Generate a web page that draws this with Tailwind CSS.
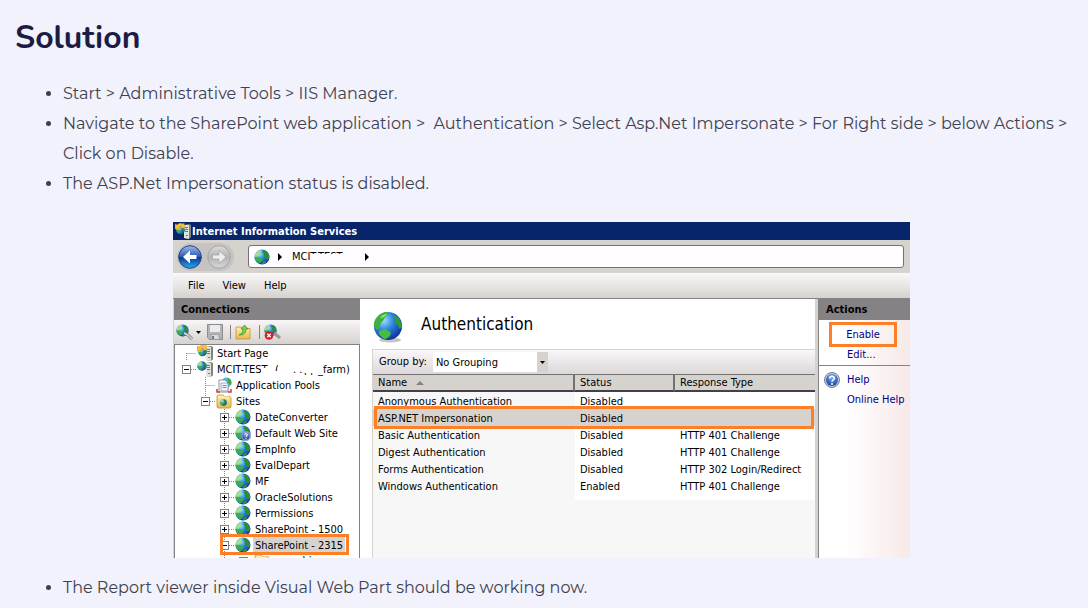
<!DOCTYPE html>
<html lang="en">
<head>
<meta charset="utf-8">
<meta name="viewport" content="width=device-width, initial-scale=1">
<title>Solution</title>
<script src="https://cdn.jsdelivr.net/npm/@tailwindcss/browser@4"></script>
</head>
<body class="min-h-screen overflow-x-hidden bg-[#f1f2fb] font-['Montserrat','Inter',sans-serif] text-[#3f4150]">
<svg class="absolute size-0" aria-hidden="true">
  <defs>
    <radialGradient id="sea" cx="35%" cy="30%" r="75%"><stop offset="0" stop-color="#9fe0ff"/><stop offset=".45" stop-color="#2f86dc"/><stop offset="1" stop-color="#0b2f9a"/></radialGradient>
    <linearGradient id="fold" x1="0" y1="0" x2="0" y2="1"><stop offset="0" stop-color="#fff0b0"/><stop offset="1" stop-color="#e8b84a"/></linearGradient>
    <radialGradient id="help" cx="50%" cy="25%" r="80%"><stop offset="0" stop-color="#7fb0f4"/><stop offset="1" stop-color="#12399f"/></radialGradient>
    <linearGradient id="back" x1="0" y1="0" x2="0" y2="1"><stop offset="0" stop-color="#9dbcec"/><stop offset=".48" stop-color="#2c5cb8"/><stop offset=".52" stop-color="#0b3596"/><stop offset="1" stop-color="#27b0f5"/></linearGradient>
    <linearGradient id="fwd" x1="0" y1="0" x2="0" y2="1"><stop offset="0" stop-color="#dcdcdc"/><stop offset=".5" stop-color="#b4b4b4"/><stop offset="1" stop-color="#d8d8d8"/></linearGradient>
    <symbol id="globe" viewBox="0 0 32 32">
      <circle cx="16" cy="16" r="15" fill="url(#sea)"/>
      <path d="M3 9C6 4 9 2 13 2l2 3-3 3 1 3-4 2-2 4-4 0-2-2Z" fill="#a4dc9a"/>
      <path d="M1 16l4-1 5 2 5 0 3 4-3 4-4 4C5 27 1 22 1 16Z" fill="#38b04a" opacity=".9"/>
      <path d="M19 2c5 1 9 5 11 10l0 7-4 3-3-5-4-2 1-5-3-3Z" fill="#2a8f3c"/>
      <path d="M18 25l5-1 1 3-5 3-3 0Z" fill="#2f9d34"/>
    </symbol>
    <symbol id="bigglobe" viewBox="0 0 32 32">
      <circle cx="16" cy="16" r="15" fill="url(#sea)"/>
      <path d="M4 7C7 3 11 1 15 1l2 2-4 3-2 4-3 3-1 5-3 2-3-4C1 12 2 9 4 7Z" fill="#3fb03c"/>
      <path d="M22 5l4 1c3 3 5 7 5 11l-3 2-2-5-3-1 1-4Z" fill="#2f9d34"/>
      <path d="M7 21l6-2 6 4-1 4-5 3c-3-1-5-3-7-6Z" fill="#46bd3e"/>
      <path d="M9 5l5-2 1 1-4 3-3 1Z" fill="#b8f08c" opacity=".7"/>
    </symbol>
    <symbol id="server" viewBox="0 0 16 16">
      <path d="M9 2l5-1 2 1v12l-2 2-5-1Z" fill="#7d827e"/><path d="M9 2h5v14l-5-1Z" fill="#dfe3dc"/>
      <path d="M10 4.500h3M10 6.500h3M10 8.500h3" stroke="#70756f"/><path d="M11 12.500h2" stroke="#3d9b3d"/>
    </symbol>
    <symbol id="start" viewBox="0 0 16 16">
      <use href="#server" width="16" height="16"/><use href="#globe" x="1" y="2" width="9" height="10"/>
      <path d="M0 6l0-5 2 1c2-2 4-2 6-1l1-1 1 5-5 0 1.500-1.500C5 3 4 3.500 3.500 4.500L4 6Z" fill="#f8c23c" stroke="#d08c14" stroke-width=".5"/>
    </symbol>
    <symbol id="host" viewBox="0 0 16 16"><use href="#server" width="16" height="16"/><use href="#globe" x="0" y="0" width="10" height="10"/></symbol>
    <symbol id="pools" viewBox="0 0 16 16">
      <circle cx="10.500" cy="5.500" r="5" fill="#49b8dc"/><path d="M12 1c3 1 4 4 3 7l-3-2Z" fill="#47a347"/>
      <path d="M3 3h6l3 3v9H3Z" fill="#fff" stroke="#8993ac"/><path d="M5 6h6l1 1v7H5Z" fill="#f1f4fb" stroke="#7f8aa8" stroke-width=".7"/><path d="M6.500 8.500h4M6.500 10.500h4" stroke="#69759c" stroke-width=".8"/>
      <path d="M1 12v3h3M15 12v3h-3" fill="none" stroke="#d63c2e" stroke-width="1.500"/>
    </symbol>
    <symbol id="folder" viewBox="0 0 16 16">
      <path d="M1 3l1-1h5l1 1.500h6l1 1V14l-1 1H2l-1-1Z" fill="url(#fold)" stroke="#c9a052"/><path d="M2 4h11" stroke="#fff6cf"/>
    </symbol>
    <symbol id="sites" viewBox="0 0 16 16"><use href="#folder" width="16" height="16"/><use href="#globe" x="4" y="6" width="7" height="7"/></symbol>
    <symbol id="ask" viewBox="0 0 16 16">
      <circle cx="8" cy="8" r="7.500" fill="#c4c8d4" stroke="#75809c"/><circle cx="8" cy="8" r="6" fill="url(#help)"/>
      <path d="M5.700 6.500C5.700 3.400 10.400 3.600 10.300 6.300 10.200 8 8 7.900 8 9.800" fill="none" stroke="#fff" stroke-width="1.600"/><circle cx="8" cy="12" r="1" fill="#fff"/>
    </symbol>
    <symbol id="plus" viewBox="0 0 19 16"><path d="M14 8.500h5" stroke="#888" stroke-dasharray="1 1"/><rect x="5.500" y="4.500" width="8" height="8" fill="#fff" stroke="#848284"/><path d="M7 8.500h5M9.500 6v5" stroke="#000"/></symbol>
    <symbol id="minus" viewBox="0 0 19 16"><path d="M14 8.500h5" stroke="#888" stroke-dasharray="1 1"/><rect x="5.500" y="4.500" width="8" height="8" fill="#fff" stroke="#848284"/><path d="M7 8.500h5" stroke="#000"/></symbol>
    <symbol id="line" viewBox="0 0 19 16"><path d="M9.500 0v16" stroke="#888" stroke-dasharray="1 1"/></symbol>
    <symbol id="half" viewBox="0 0 19 16"><path d="M9.500 0v8" stroke="#888" stroke-dasharray="1 1"/></symbol>
    <symbol id="elbow" viewBox="0 0 19 16"><path d="M9.500 8.500h10M9.500 8v8" stroke="#888" stroke-dasharray="1 1"/></symbol>
    <symbol id="tee" viewBox="0 0 19 16"><path d="M9.500 8.500h10M9.500 0v16" stroke="#888" stroke-dasharray="1 1"/></symbol>
  </defs>
</svg>

<main class="pr-5 pl-[15px] pt-[17px]">
  <h1 class="font-['Nunito','Noto_Sans',sans-serif] text-[32px] leading-[42px] font-bold text-[#1c1d45]">Solution</h1>

  <ul class="mt-5 list-disc pl-12 text-base leading-[30px]">
    <li>Start &gt; Administrative Tools &gt; IIS Manager.</li>
    <li>Navigate to the SharePoint web application &gt;&nbsp; Authentication &gt; Select Asp.Net Impersonate &gt; For Right side &gt; below Actions &gt; Click on Disable.</li>
    <li>The ASP.Net Impersonation status is disabled.</li>
  </ul>

  <section aria-label="IIS Manager" class="mx-auto mt-[23px] w-full max-w-[737px] bg-[#d6d3ce] font-['Tahoma','DejaVu_Sans_Condensed','DejaVu_Sans',sans-serif] text-[11px] leading-4 text-black">
    <header class="flex h-[18px] items-center gap-px bg-[#08246b] pl-0.5 font-bold text-white">
      <svg class="size-4 shrink-0"><use href="#start"/></svg>
      <span class="w-[168px] overflow-hidden pt-px whitespace-nowrap">Internet Information Services</span>
    </header>

    <div class="flex h-[33px] items-center pr-1.5 pl-1">
      <div class="flex h-7 w-[57px] items-center gap-[5px] rounded-full bg-[#c6c3c2] pl-px">
        <button aria-label="Back" class="size-6 shrink-0"><svg viewBox="0 0 24 24" class="size-6"><circle cx="12" cy="12" r="11.300" fill="url(#back)" stroke="#27407c"/><path d="M5 12l7-6.500v4.500h6.500v4H12v4.500Z" fill="#fff"/></svg></button>
        <button aria-label="Forward" class="size-6 shrink-0"><svg viewBox="0 0 24 24" class="size-6"><circle cx="12" cy="12" r="11.300" fill="url(#fwd)" stroke="#a5a5a5"/><path d="M19 12l-7-6.500v4.500H5.500v4H12v4.500Z" fill="#eee" stroke="#999" stroke-width=".6"/></svg></button>
      </div>
      <nav aria-label="Address" class="ml-3.5 flex h-[23px] flex-1 items-center rounded-[3px] border border-[#737173] bg-[#fffdff] pl-[5px]">
        <svg class="size-4"><use href="#globe"/></svg>
        <svg viewBox="0 0 4 8" class="ml-2 h-2 w-1"><path d="M0 0l4 4-4 4Z"/></svg>
        <span class="relative ml-2.5 w-[60px] whitespace-nowrap">MCIT-TEST<span class="absolute top-[5px] right-0 left-[19px] h-3 bg-[#fffdff]"></span></span>
        <svg viewBox="0 0 4 8" class="ml-[13px] h-2 w-1"><path d="M0 0l4 4-4 4Z"/></svg>
      </nav>
    </div>

    <div class="flex h-[26px] items-center gap-[18px] border-b border-[#848284] bg-linear-to-b from-[#faf7f9] to-[#d6d3ce] pl-[15px]">
      <button>File</button><button>View</button><button>Help</button>
    </div>

    <div class="flex">
      <aside class="flex w-[187px] shrink-0 flex-col border-l border-[#d6d3ce]">
        <h2 class="h-[21px] bg-[#848284] pl-[7px] leading-[22px] font-bold">Connections</h2>
        <div class="flex h-[25px] items-center border-b border-[#848284] bg-linear-to-b from-[#f9f4f6] to-[#d6d3ce] pl-0.5">
          <button aria-label="Connect" class="flex items-center gap-0.5">
            <svg viewBox="0 0 18 16" class="h-4 w-[18px]"><use href="#globe" width="13" height="13"/><path d="M8 9l4 2 4 4" fill="none" stroke="#777" stroke-width="3"/><path d="M8 9l4 2 4 4" fill="none" stroke="#d7dbe2" stroke-width="1.500"/></svg>
            <svg viewBox="0 0 5 3" class="h-[3px] w-[5px]"><path d="M0 0h5L2.500 3Z"/></svg>
          </button>
          <button aria-label="Save" class="ml-1.5"><svg viewBox="0 0 16 16" class="size-4"><path d="M.5.5h15v15h-13l-2-2Z" fill="#b4b4b8" stroke="#8b8b90"/><path d="M3 1h10v7H3Z" fill="#ececf0"/><path d="M4 10.500h8v5H4Z" fill="#dadade" stroke="#8b8b90" stroke-width=".6"/><path d="M5 12h2v3H5Z" fill="#77777c"/></svg></button>
          <span class="ml-[7px] h-3.5 w-px bg-[#848284]"></span>
          <button aria-label="Up" class="ml-1"><svg viewBox="0 0 16 16" class="size-4"><path d="M1 3h5l1.500 1.500H15V15H1Z" fill="url(#fold)" stroke="#c9a052"/><path d="M4 11c3-1 4-3 4-6H6L9.500 1 13 5h-2c0 4-2 6-7 6Z" fill="#7bd34a" stroke="#2f8a22" stroke-width=".7"/></svg></button>
          <span class="ml-2 h-3.5 w-px bg-[#848284]"></span>
          <button aria-label="Disconnect" class="ml-1"><svg viewBox="0 0 17 16" class="h-4 w-[17px]"><use href="#globe" width="13" height="13"/><path d="M10 9l6 5" stroke="#999" stroke-width="3"/><circle cx="5" cy="11.500" r="4.300" fill="#d71f1f"/><path d="M3.300 9.800l3.400 3.400M6.700 9.800l-3.400 3.400" stroke="#fff" stroke-width="1.300"/></svg></button>
        </div>
        <ul class="flex-1 border-r border-l border-[#848284] bg-white pl-0.5 leading-[18px] whitespace-nowrap">
          <li class="flex h-4"><svg class="h-4 w-[19px]"><use href="#elbow"/></svg><svg class="ml-px size-4"><use href="#start"/></svg><span class="ml-0.5 px-0.5">Start Page</span></li>
          <li class="flex h-4"><svg class="h-4 w-[19px]"><use href="#minus"/></svg><svg class="ml-px size-4"><use href="#host"/></svg><span class="relative ml-0.5 flex-1 pl-0.5">MCIT-TEST<span class="absolute top-[7px] left-[46px] h-2.5 w-2 bg-white"></span><span class="absolute top-0 left-[60px]">(<span class="absolute top-[10px] left-0 h-1 w-2 bg-white"></span></span><span class="absolute top-0 left-[78px]">. .<span class="absolute top-0 left-[11px]">pp</span><span class="absolute top-0 left-[10px] h-3 w-4 bg-white"></span></span><span class="absolute top-0 left-[103px]">_farm)</span></span></li>
          <li class="flex h-4"><svg class="h-4 w-[19px]"></svg><svg class="h-4 w-[19px]"><use href="#tee"/></svg><svg class="ml-px size-4"><use href="#pools"/></svg><span class="ml-0.5 px-0.5">Application Pools</span></li>
          <li class="flex h-4"><svg class="h-4 w-[19px]"></svg><svg class="h-4 w-[19px]"><use href="#half"/><use href="#minus"/></svg><svg class="ml-px size-4"><use href="#sites"/></svg><span class="ml-0.5 px-0.5">Sites</span></li>
          <li class="flex h-4 pl-[38px]"><svg class="h-4 w-[19px]"><use href="#line"/><use href="#plus"/></svg><svg class="ml-px size-4"><use href="#globe"/></svg><span class="ml-0.5 px-0.5">DateConverter</span></li>
          <li class="flex h-4 pl-[38px]"><svg class="h-4 w-[19px]"><use href="#line"/><use href="#plus"/></svg><svg class="ml-px size-4"><use href="#globe"/><use href="#ask" x="6" y="6" width="10" height="10"/></svg><span class="ml-0.5 px-0.5">Default Web Site</span></li>
          <li class="flex h-4 pl-[38px]"><svg class="h-4 w-[19px]"><use href="#line"/><use href="#plus"/></svg><svg class="ml-px size-4"><use href="#globe"/></svg><span class="ml-0.5 px-0.5">EmpInfo</span></li>
          <li class="flex h-4 pl-[38px]"><svg class="h-4 w-[19px]"><use href="#line"/><use href="#plus"/></svg><svg class="ml-px size-4"><use href="#globe"/></svg><span class="ml-0.5 px-0.5">EvalDepart</span></li>
          <li class="flex h-4 pl-[38px]"><svg class="h-4 w-[19px]"><use href="#line"/><use href="#plus"/></svg><svg class="ml-px size-4"><use href="#globe"/></svg><span class="ml-0.5 px-0.5">MF</span></li>
          <li class="flex h-4 pl-[38px]"><svg class="h-4 w-[19px]"><use href="#line"/><use href="#plus"/></svg><svg class="ml-px size-4"><use href="#globe"/></svg><span class="ml-0.5 px-0.5">OracleSolutions</span></li>
          <li class="flex h-4 pl-[38px]"><svg class="h-4 w-[19px]"><use href="#line"/><use href="#plus"/></svg><svg class="ml-px size-4"><use href="#globe"/></svg><span class="ml-0.5 px-0.5">Permissions</span></li>
          <li class="flex h-4 pl-[38px]"><svg class="h-4 w-[19px]"><use href="#line"/><use href="#plus"/></svg><svg class="ml-px size-4"><use href="#globe"/></svg><span class="ml-0.5 px-0.5">SharePoint - 1500</span></li>
          <li class="relative flex h-4 pl-[38px]"><svg class="h-4 w-[19px]"><use href="#line"/><use href="#minus"/></svg><svg class="ml-px size-4"><use href="#globe"/></svg><span class="ml-0.5 bg-[#d6d3ce] px-0.5">SharePoint - 2315</span><span class="absolute -top-[3px] right-2.5 -bottom-0.5 left-[43px] border-3 border-[#ff7f27]"></span></li>
          <li class="flex h-[5px] overflow-hidden pl-[38px]"><svg class="h-4 w-[19px] shrink-0"><use href="#line"/></svg><svg class="h-4 w-[19px] shrink-0"><use href="#minus"/></svg><svg class="ml-px size-4 shrink-0"><use href="#folder"/></svg><span class="ml-0.5 px-0.5 leading-4">_app_bin</span></li>
        </ul>
      </aside>

      <div class="flex min-w-0 flex-1 flex-col bg-white pl-3">
        <div class="flex h-[50px] items-center gap-[17px]">
          <svg viewBox="0 0 32 32" class="mt-1.5 size-8"><ellipse cx="18" cy="29" rx="11" ry="2.500" fill="#c4c4c4"/><use href="#bigglobe" x="1" width="30" height="30"/></svg>
          <h2 class="text-[17px]">Authentication</h2>
        </div>
        <div class="flex h-[25px] items-center border-t border-l border-[#d6d3ce] bg-linear-to-b from-[#fbf6fa] to-[#dcd8d6] pl-1.5">
          <label for="group">Group by:</label>
          <div class="relative ml-1.5 h-5 w-[115px]">
            <select id="group" class="size-full appearance-none bg-white pt-0.5 pl-[3px]"><option>No Grouping</option></select>
            <span class="pointer-events-none absolute top-0 right-0 flex h-5 w-[11px] items-center justify-center bg-[#d6d3ce]"><svg viewBox="0 0 5 3" class="h-[3px] w-[5px]"><path d="M0 0h5L2.500 3Z"/></svg></span>
          </div>
        </div>
        <div class="flex-1 border-l border-[#d6d3ce] bg-[#f7f7f7]">
          <table class="w-full table-fixed border-separate border-spacing-0 text-left">
            <colgroup><col class="w-[202px]"><col class="w-[100px]"><col></colgroup>
            <thead class="leading-[14px]"><tr class="bg-[#d6d3ce]">
              <th class="border-t border-r-2 border-b-2 border-[#737173] border-b-[#42414a] pt-px pl-[5px] font-normal">Name <svg viewBox="0 0 8 4" class="ml-1.5 inline h-1 w-2"><path d="M0 4h8L4 0Z" fill="#848284"/></svg></th>
              <th class="border-t border-r-2 border-b-2 border-[#737173] border-b-[#42414a] pt-px pl-[5px] font-normal">Status</th>
              <th class="border-t border-b-2 border-[#737173] border-b-[#42414a] pt-px pl-[5px] font-normal">Response Type</th>
            </tr></thead>
            <tbody class="align-top leading-[15px]">
              <tr><td class="pt-0.5 pl-[5px]">Anonymous Authentication</td><td class="bg-white pt-0.5 pl-[5px]">Disabled</td><td class="bg-white"></td></tr>
              <tr class="relative bg-[#d6d3ce]"><td class="pt-0.5 pl-[5px]">ASP.NET Impersonation<span class="absolute -inset-y-[3px] right-px left-px border-3 border-[#ff7f27]"></span></td><td class="pt-0.5 pl-[5px]">Disabled</td><td></td></tr>
              <tr><td class="pt-0.5 pl-[5px]">Basic Authentication</td><td class="bg-white pt-0.5 pl-[5px]">Disabled</td><td class="bg-white pt-0.5 pl-[5px]">HTTP 401 Challenge</td></tr>
              <tr><td class="pt-0.5 pl-[5px]">Digest Authentication</td><td class="bg-white pt-0.5 pl-[5px]">Disabled</td><td class="bg-white pt-0.5 pl-[5px]">HTTP 401 Challenge</td></tr>
              <tr><td class="pt-0.5 pl-[5px]">Forms Authentication</td><td class="bg-white pt-0.5 pl-[5px]">Disabled</td><td class="bg-white pt-0.5 pl-[5px]">HTTP 302 Login/Redirect</td></tr>
              <tr><td class="pt-0.5 pl-[5px]">Windows Authentication</td><td class="bg-white pt-0.5 pb-1.5 pl-[5px]">Enabled</td><td class="bg-white pt-0.5 pb-1.5 pl-[5px]">HTTP 401 Challenge</td></tr>
            </tbody>
          </table>
        </div>
      </div>

      <aside class="ml-[3px] w-[92px] shrink-0 border-l border-[#848284] bg-linear-to-r from-white from-30% to-[#f7e9e8] text-[#000084]">
        <h2 class="h-[21px] bg-[#848284] pl-[7px] leading-[22px] font-bold text-black">Actions</h2>
        <div class="px-2.5 pt-0.5"><a href="#" class="flex h-[25px] w-[68px] items-center justify-center border-3 border-[#ff7f27] pt-px">Enable</a></div>
        <a href="#" class="block h-[19px] border-b border-[#848284] pl-7">Edit...</a>
        <a href="#" class="mt-1.5 flex items-center gap-[7px] pl-[5px]"><svg class="size-4"><use href="#ask"/></svg>Help</a>
        <a href="#" class="mt-1 block pl-7 whitespace-nowrap">Online Help</a>
      </aside>
    </div>
  </section>

  <ul class="mt-[15px] list-disc pl-12 text-base leading-[30px]">
    <li>The Report viewer inside Visual Web Part should be working now.</li>
  </ul>
</main>
</body>
</html>
